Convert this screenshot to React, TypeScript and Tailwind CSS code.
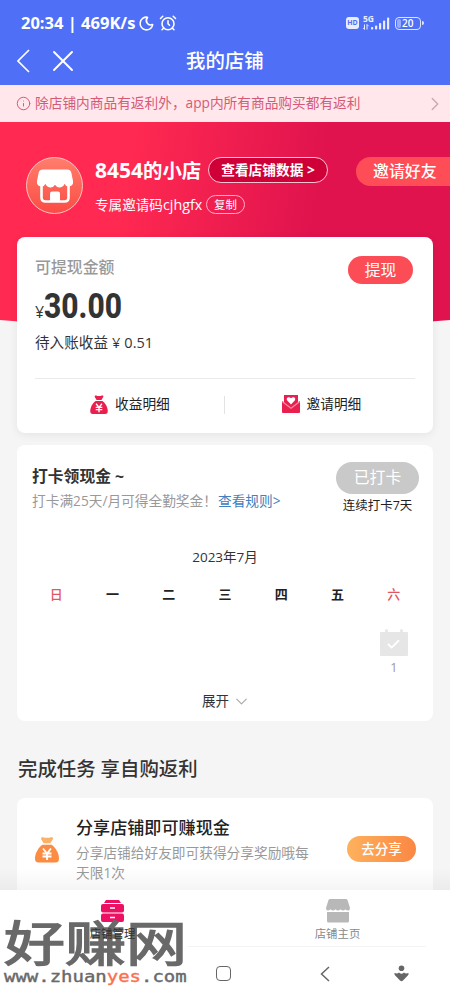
import { AlarmClock, Check, ChevronDown, ChevronRight, Info, Moon, X } from "lucide-react";

const WEEK = ["日", "一", "二", "三", "四", "五", "六"];

function StatusBar() {
  return (
    <div className="flex h-[46px] items-center pl-[21px] pr-[26px] text-white">
      <span className="w-[117px] whitespace-nowrap font-['Open_Sans'] text-[16.5px] font-bold leading-5">
        20:34 | 469K/s
      </span>
      <Moon className="rotate-[10deg]" size={17} strokeWidth={2.2} />
      <AlarmClock className="ml-[4px]" size={18} strokeWidth={2.1} />
      <div className="ml-auto flex items-center">
        <span className="flex h-[12px] w-[13px] items-center justify-center rounded-[3px] bg-[#e9edff] text-[7px] font-bold text-[#5070f5]">
          HD
        </span>
        <svg className="ml-[4px]" width="28" height="18" viewBox="0 0 28 18" fill="#e9edff">
          <text x="0" y="7.5" fontSize="8.5" fontWeight="700" fontFamily="Open Sans, sans-serif">
            5G
          </text>
          <path d="M1.500 10.500v5M0 13.700l1.500 1.700M4 15.500v-5M4 10.500l1.600 1.700" stroke="#e9edff" strokeWidth="1" />
          <rect x="8" y="13" width="2.2" height="2.500" rx=".8" />
          <rect x="12" y="11.500" width="2.2" height="4" rx=".8" />
          <rect x="16" y="9" width="2.2" height="6.500" rx=".8" />
          <rect x="20" y="6.500" width="2.2" height="9" rx=".8" />
          <rect x="24" y="3.500" width="2.2" height="12" rx=".8" />
        </svg>
        <div className="ml-[4px] mr-[1px] flex h-[13px] w-[26px] shrink-0 items-center rounded-[4px] border-[1.5px] border-[#dfe5ff] p-[1px]">
          <span className="h-full w-[4px] rounded-[2px] bg-[#9aacf9]" />
          <span className="ml-[1px] font-['Open_Sans'] text-[10px] font-semibold leading-none">20</span>
        </div>
        <span className="h-[4px] w-[2px] rounded-r bg-[#dfe5ff]" />
      </div>
    </div>
  );
}

function MoneyBag({ className, color, top }: { className: string; color: string; top: string }) {
  return (
    <svg className={className} viewBox="0 0 24 26">
      <path d="M6 2.500C6 .5 8 .6 9.500 1.300h5C16 .6 18.500.5 18 2.500L15.300 6.800H8.700Z" fill={top} />
      <path d="M7.500 8.200h9C20.500 10.500 24 17 24 22c0 2.500-1 4-3.500 4h-17C1 26 0 24.500 0 22 0 17 3.500 10.500 7.500 8.200Z" fill={color} />
      <path d="m8 12 4 5 4-5M7.500 17h9M7.500 20h9M12 17v6.500" fill="none" stroke="#fff" strokeWidth="1.800" />
    </svg>
  );
}

function ShopHeader() {
  return (
    <div className="flex h-[115px] text-white">
      <div className="ml-[26px] mt-[35px] flex h-[57px] w-[57px] items-center justify-center rounded-full border border-[#ffc4c0] bg-linear-to-b from-[#ff7d6c] to-[#fb4a44]">
        <svg width="36" height="36" viewBox="0 0 36 36">
          <path d="M4.500 15v14.500q0 4 4 4h19q4 0 4-4V15" fill="none" stroke="#fff" strokeWidth="2.600" />
          <path d="M13 33.500V25.500q0-2 2-2h6q2 0 2 2v8Z" fill="#fff" />
          <path d="M6 1.500h24q4 0 4.500 4L36 13a4.500 4.500 0 0 1-8.500 2.800 5.200 5.200 0 0 1-9.500 1 5.200 5.200 0 0 1-9.500-1A4.500 4.500 0 0 1 0 13l1.500-7.500q.5-4 4.500-4Z" fill="#fff" />
        </svg>
      </div>
      <div className="ml-[12px] mt-[35px] w-[240px]">
        <div className="flex h-[26px] items-center">
          <span className="w-[113px] whitespace-nowrap pt-[2px] text-[19.4px] font-bold">
            <span className="text-[21px]">8454</span>的小店
          </span>
          <span className="flex h-[26px] w-[120px] items-center justify-center whitespace-nowrap rounded-full border border-[#ffc3d2] bg-[#cf0038] text-[13.7px] font-bold">
            查看店铺数据 &gt;
          </span>
        </div>
        <div className="mt-[12px] flex h-[19px] items-center">
          <span className="w-[111px] whitespace-nowrap text-[13.6px]">
            专属邀请码<span className="text-[14.3px]">cjhgfx</span>
          </span>
          <span className="flex h-[19px] w-[39px] items-center justify-center rounded-full border border-[#ffb0c2] text-[11.4px]">
            复制
          </span>
        </div>
      </div>
      <div className="ml-auto mt-[35px] flex h-[29px] w-[94px] items-center rounded-l-full bg-[#ff4d57] pl-[17px] text-[15.9px] font-medium">
        邀请好友
      </div>
    </div>
  );
}

function BalanceCard() {
  return (
    <section className="mx-[17px] h-[196px] rounded-[8px] bg-white px-[18px] pt-[19px] shadow-[0_2px_10px_rgba(0,0,0,0.07)]">
      <div className="flex h-[28px] justify-between">
        <span className="text-[15.9px] font-medium leading-[22px] text-[#999]">可提现金额</span>
        <button className="mr-[2px] h-[28px] w-[65px] rounded-full bg-[#fc4c56] text-[15.8px] leading-[26px] text-white">
          提现
        </button>
      </div>
      <div className="flex h-[44px] text-[#333]">
        <span className="w-[9px] pt-[16px] text-[16px] leading-[24px]">¥</span>
        <span className="origin-left scale-x-[.855] font-['Roboto'] text-[35px] font-extrabold leading-[45px]">30.00</span>
      </div>
      <p className="h-[50px] whitespace-nowrap text-[14.6px] leading-[28px] text-[#333]">
        待入账收益<span className="mx-[4px]">¥</span>
        <span className="text-[14.500px]">0.51</span>
      </p>
      <div className="flex h-[52px] items-center border-t border-[#eaeaea] text-[13.7px] text-[#222]">
        <div className="flex h-[18px] flex-1 items-center border-r border-[#e3e3e3] pl-[55px]">
          <MoneyBag className="mr-[7px] h-[19px] w-[18px]" color="#e91f4e" top="#e91f4e" />
          收益明细
        </div>
        <div className="flex flex-1 items-center pl-[57px]">
          <svg className="mr-[7px]" width="18" height="18" viewBox="0 0 18 18">
            <path d="M2 0h14v10l-7 5-7-5Z" fill="#e91f4e" />
            <path d="m0 6 9 6.500L18 6v11q0 1-1 1H1q-1 0-1-1Z" fill="#e91f4e" />
            <path d="m9 9.500-3.800-4C3.500 2.900 7 1 9 3.300c2-2.300 5.500-.4 3.800 2.200Z" fill="#fff" />
            <path d="m.5 6.800 8.500 6.500 8.500-6.500" fill="none" stroke="#ff8aa5" strokeWidth="1.300" />
          </svg>
          邀请明细
        </div>
      </div>
    </section>
  );
}

function CheckInCard() {
  return (
    <section className="mx-[17px] mt-[12px] h-[276px] rounded-[8px] bg-white pt-[17px]">
      <div className="flex h-[83px] justify-between pl-[15px] pr-[14px]">
        <div className="whitespace-nowrap">
          <h2 className="pt-[1px] text-[15.8px] font-bold leading-[26px] text-[#333]">打卡领现金 ~</h2>
          <p className="text-[13.7px] leading-[23px] text-[#999]">
            打卡满25天/月可得全勤奖金！
            <a className="ml-[1px] text-[#4380bd]">查看规则&gt;</a>
          </p>
        </div>
        <div className="flex w-[83px] flex-col items-center">
          <div className="flex h-[32px] w-[83px] items-center justify-center rounded-full bg-[#c9c9c9] text-[15.8px] text-white">
            已打卡
          </div>
          <span className="whitespace-nowrap text-[12.500px] leading-[23px] text-[#222]">连续打卡7天</span>
        </div>
      </div>
      <div className="text-center text-[13.500px] leading-[24px] text-[#333]">2023年7月</div>
      <div className="mx-[11px] mt-[14px] grid grid-cols-7 text-center text-[13px] font-bold leading-[22px] text-[#222]">
        {WEEK.map((day, i) => (
          <span key={day} className={i === 0 || i === 6 ? "font-medium text-[#e35562]" : ""}>
            {day}
          </span>
        ))}
      </div>
      <div className="mx-[11px] mt-[24px] grid h-[48px] grid-cols-7">
        <div className="col-start-7 flex flex-col items-center">
          <div className="flex h-[28px] w-[28px] flex-col">
            <div className="flex h-[7px] justify-between px-[5px]">
              <span className="h-[7px] w-[3px] rounded-full bg-[#e8e8e8]" />
              <span className="h-[7px] w-[3px] rounded-full bg-[#e8e8e8]" />
            </div>
            <div className="-mt-[4px] flex h-[24px] items-center justify-center rounded-[1px] bg-[#e6e6e6] text-white">
              <Check size={15} strokeWidth={3} />
            </div>
          </div>
          <span className="text-[12.500px] leading-[21px] text-[#999]">1</span>
        </div>
      </div>
      <div className="mt-[12px] flex h-[24px] items-center justify-center pl-[3px] text-[13.500px] text-[#333]">
        展开
        <ChevronDown className="ml-[3px] text-[#aaa]" size={19} strokeWidth={1.500} />
      </div>
    </section>
  );
}

function TaskCard() {
  return (
    <section className="mx-[17px] flex h-[92px] rounded-t-[8px] bg-white">
      <MoneyBag className="ml-[18px] mt-[38px] h-[27px] w-[24px]" color="#fb8c42" top="#f9b267" />
      <div className="ml-[17px] w-[244px] pt-[16px]">
        <h3 className="whitespace-nowrap text-[17.1px] font-medium leading-[27px] text-[#222]">分享店铺即可赚现金</h3>
        <p className="mt-[2px] w-[236px] text-[13.7px] leading-[20px] text-[#999]">
          分享店铺给好友即可获得分享奖励哦每天限1次
        </p>
      </div>
      <button className="ml-auto mr-[17px] mt-[38px] h-[26px] w-[69px] rounded-full bg-linear-to-r from-[#feb15c] to-[#fa8744] text-[13.500px] font-medium leading-[24px] text-white">
        去分享
      </button>
    </section>
  );
}

function BottomTabs() {
  return (
    <nav className="relative flex h-[56px] bg-white text-[11.4px]">
      <div className="pointer-events-none absolute inset-x-0 -top-[22px] h-[22px] bg-linear-to-b from-transparent to-black/4" />
      <div className="flex flex-1 flex-col items-center pt-[9px] text-[#333]">
        <svg width="23" height="24" viewBox="0 0 23 24" fill="#ed1164">
          <path d="M5 1h13l2 3H3Z" />
          <rect y="5" width="23" height="8.500" rx="2" />
          <rect y="14.500" width="23" height="8.500" rx="2" />
          <path d="M9 9h5M9 18.500h5" stroke="#fff" strokeWidth="1.400" />
        </svg>
        <span className="relative z-20 leading-[22px]">店铺管理</span>
      </div>
      <div className="flex flex-1 flex-col items-center pt-[8px] text-[#888]">
        <svg width="24" height="25" viewBox="0 0 24 25" fill="#b8b8b8">
          <path d="M4 1h16q1 0 1.500 1L24 10q0 2.500-2 2.500t-2.500-1.300q-1.200 1.300-2.500 1.300t-2.500-1.300q-1.200 1.300-2.500 1.300t-2.500-1.300Q8.300 12.500 7 12.500t-2.500-1.300Q3.300 12.500 2 12.500 0 12.500 0 10l2.500-8q.5-1 1.500-1Z" />
          <path d="M1 14h22v9q0 1.500-1.500 1.500h-19Q1 24.500 1 23Z" />
        </svg>
        <span className="leading-[22px]">店铺主页</span>
      </div>
    </nav>
  );
}

function SystemNav() {
  return (
    <div className="bg-white">
      <div className="ml-[188px] mr-[24px] h-px bg-[#f4f4f4]" />
      <div className="flex h-[53px] items-center pl-[216px]">
        <span className="h-[15px] w-[15px] rounded-[4px] border-[1.500px] border-[#666]" />
        <svg className="ml-[89px]" width="10" height="16" viewBox="0 0 10 16" fill="none" stroke="#666" strokeWidth="1.500">
          <path d="M9 1 1.500 8 9 15" />
        </svg>
        <svg className="ml-[64px]" width="15" height="17" viewBox="0 0 15 17" fill="#666">
          <circle cx="7.500" cy="3.200" r="2.800" />
          <path d="M.5 8q3 1 4.500-.5Q7.500 10 10 7.500 11.500 9 14.500 8q.5 1-.7 2.500L9 15.500q-1.500 1.500-3 0l-4.800-5Q0 9 .5 8Z" />
        </svg>
      </div>
    </div>
  );
}

function Watermark() {
  return (
    <div className="absolute left-[4px] top-[916px] flex h-[75px] w-[190px] flex-col whitespace-nowrap text-[#696969]">
      <div className="h-[52px] origin-left scale-x-[1.27] text-[48px] font-normal leading-[54px] [-webkit-text-stroke:1.500px_#696969]">
        好赚网
      </div>
      <div className="origin-left scale-x-[1.2] font-['DejaVu_Sans_Mono'] text-[15.800px] leading-[18px] [-webkit-text-stroke:0.400px]">
        www.zhuan<span className="text-[#fb7150]">yes</span>.com
      </div>
    </div>
  );
}

export default function App() {
  return (
    <div className="relative h-[1000px] w-[450px] overflow-hidden bg-[#f5f5f5] font-['Open_Sans','Noto_Sans_CJK_SC',sans-serif]">
      <header className="h-[85px] bg-[#4f70f6] text-white">
        <StatusBar />
        <div className="flex h-[29px] items-center">
          <svg className="ml-[17px]" width="13" height="24" viewBox="0 0 13 24" fill="none" stroke="#fff" strokeWidth="1.600">
            <path d="M12 1 1 12l11 11" />
          </svg>
          <X className="ml-[15px]" size={36} strokeWidth={1.300} />
          <h1 className="ml-[105px] text-[19.400px] font-medium">我的店铺</h1>
        </div>
      </header>
      <div className="flex h-[37px] items-center bg-[#ffe7eb] text-[13.700px] text-[#d65a78]">
        <Info className="ml-[16px] mr-[4px]" size={15} strokeWidth={1.600} />
        <span className="whitespace-nowrap">除店铺内商品有返利外，app内所有商品购买都有返利</span>
        <ChevronRight className="ml-auto mr-[4px] text-[#c9a9b0]" size={22} strokeWidth={1.500} />
      </div>
      <div className="grid h-[311px] grid-cols-1">
        <div className="h-[216px] bg-[linear-gradient(100deg,#ff2951_28%,#e0134e_68%)] [clip-path:polygon(0_0,100%_0,100%_198px,50%_216px,0_198px)] [grid-area:1/1]" />
        <div className="z-10 [grid-area:1/1]">
          <ShopHeader />
          <BalanceCard />
        </div>
      </div>
      <CheckInCard />
      <h2 className="mx-[18px] flex h-[77px] items-center whitespace-nowrap pt-[18px] text-[19.400px] font-medium text-[#333]">
        完成任务 享自购返利
      </h2>
      <TaskCard />
      <BottomTabs />
      <SystemNav />
      <Watermark />
    </div>
  );
}
